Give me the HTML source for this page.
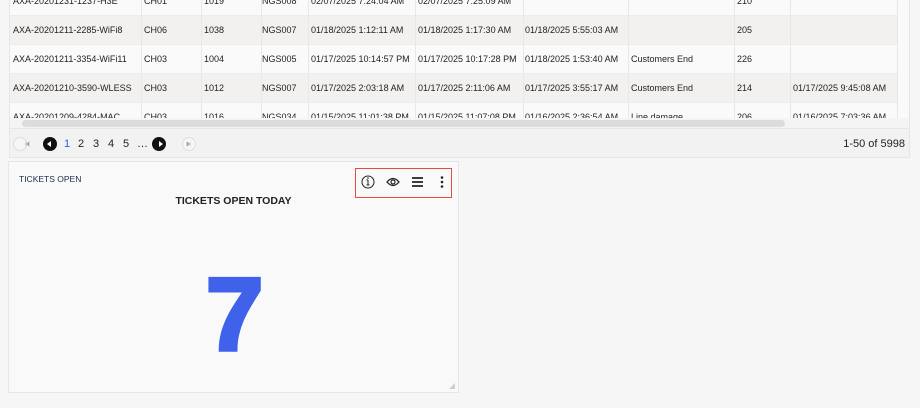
<!DOCTYPE html>
<html><head><style>
*{margin:0;padding:0;box-sizing:border-box}
body{width:920px;height:408px;background:#f6f6f6;font-family:"Liberation Sans",sans-serif;position:relative;overflow:hidden;color:#222}
.tbl{position:absolute;left:9px;top:0;width:901px;height:158px;background:#fafafa;border:1px solid #e6e6e6;border-top:none;overflow:hidden}
.row{position:absolute;left:0;width:888px;height:29px;font-size:9px;line-height:29px;border-bottom:1px solid #ececec}
.row span{position:absolute;top:0;white-space:nowrap}
.odd{background:#f2f1f0}.even{background:#fafafa}
.vl{position:absolute;top:0;height:119px;width:1px;background:#e8e8e8}
.sb{position:absolute;left:0;top:118px;width:899px;height:10px;background:#f4f4f4}
.thumb{position:absolute;left:12px;top:120px;width:763px;height:7px;border-radius:4px;background:#dcdcdc}
.pg{position:absolute;left:0;top:128px;width:899px;height:29px;background:#f2f2f2;border-top:1px solid #e6e6e6}
.circ{position:absolute;width:14px;height:14px;border-radius:7px;top:8px}
.card{position:absolute;left:8px;top:161px;width:451px;height:232px;background:#f9f9f9;border:1px solid #e6e6e6}
.n{position:absolute;top:7px;font-size:11px;line-height:16px}
</style></head><body>
<div class="tbl">
<div class="row even" style="top:-13px"><span style="left:3px">AXA-20201231-1237-H3E</span><span style="left:134px">CH01</span><span style="left:194px">1019</span><span style="left:252px">NGS008</span><span style="left:301px">02/07/2025 7:24:04 AM</span><span style="left:408px">02/07/2025 7:25:09 AM</span><span style="left:727px">210</span></div>
<div class="row odd" style="top:16px"><span style="left:3px">AXA-20201211-2285-WiFi8</span><span style="left:134px">CH06</span><span style="left:194px">1038</span><span style="left:252px">NGS007</span><span style="left:301px">01/18/2025 1:12:11 AM</span><span style="left:408px">01/18/2025 1:17:30 AM</span><span style="left:515px">01/18/2025 5:55:03 AM</span><span style="left:727px">205</span></div>
<div class="row even" style="top:45px"><span style="left:3px">AXA-20201211-3354-WiFi11</span><span style="left:134px">CH03</span><span style="left:194px">1004</span><span style="left:252px">NGS005</span><span style="left:301px">01/17/2025 10:14:57 PM</span><span style="left:408px">01/17/2025 10:17:28 PM</span><span style="left:515px">01/18/2025 1:53:40 AM</span><span style="left:621px">Customers End</span><span style="left:727px">226</span></div>
<div class="row odd" style="top:74px"><span style="left:3px">AXA-20201210-3590-WLESS</span><span style="left:134px">CH03</span><span style="left:194px">1012</span><span style="left:252px">NGS007</span><span style="left:301px">01/17/2025 2:03:18 AM</span><span style="left:408px">01/17/2025 2:11:06 AM</span><span style="left:515px">01/17/2025 3:55:17 AM</span><span style="left:621px">Customers End</span><span style="left:727px">214</span><span style="left:783px">01/17/2025 9:45:08 AM</span></div>
<div class="row even" style="top:103px"><span style="left:3px">AXA-20201209-4284-MAC</span><span style="left:134px">CH03</span><span style="left:194px">1016</span><span style="left:252px">NGS034</span><span style="left:301px">01/15/2025 11:01:38 PM</span><span style="left:408px">01/15/2025 11:07:08 PM</span><span style="left:515px">01/16/2025 2:36:54 AM</span><span style="left:621px">Line damage</span><span style="left:727px">206</span><span style="left:783px">01/16/2025 7:03:36 AM</span></div>
<div class="vl" style="left:131px"></div><div class="vl" style="left:191px"></div><div class="vl" style="left:251px"></div><div class="vl" style="left:298px"></div><div class="vl" style="left:405px"></div><div class="vl" style="left:513px"></div><div class="vl" style="left:618px"></div><div class="vl" style="left:724px"></div><div class="vl" style="left:780px"></div><div class="vl" style="left:887px"></div>
<div class="sb"></div><div class="thumb"></div>
<div class="pg">
<div class="circ" style="left:3px;background:#f6f6f6;border:1px solid #ddd"></div>
<div class="circ" style="left:33px;background:#111"></div>
<div class="n" style="left:54px;color:#2a64d8">1</div>
<div class="n" style="left:68px">2</div>
<div class="n" style="left:83px">3</div>
<div class="n" style="left:98px">4</div>
<div class="n" style="left:113px">5</div>
<div class="n" style="left:127px">…</div>
<div class="circ" style="left:142px;background:#111"></div>
<div class="circ" style="left:172px;background:#f6f6f6;border:1px solid #ddd"></div>
<div style="position:absolute;right:4px;top:7px;font-size:11px;line-height:16px">1-50 of 5998</div>
</div>
</div>
<svg style="position:absolute;left:9px;top:137px" width="200" height="14"><path d="M42 4 L38 7 L42 10Z" fill="#fff"/><path d="M150 4 L154 7 L150 10Z" fill="#fff"/><path d="M17 5v4M18 7l2-2v4z M181 5v4M180 7l-2-2v4z" stroke="#999" stroke-width=".6" fill="#999"/></svg>
<div class="card">
<div style="position:absolute;left:10px;top:12px;font-size:8.5px;color:#1d2a4a">TICKETS OPEN</div>
<div style="position:absolute;left:0;width:100%;top:33px;text-align:center;font-size:10.5px;font-weight:bold;color:#222">TICKETS OPEN TODAY</div>
<div style="position:absolute;left:346px;top:6px;width:97px;height:30px;border:1.5px solid #ea4a3a"></div>
<svg style="position:absolute;left:346px;top:6px" width="97" height="30">
<circle cx="13" cy="14" r="6" fill="none" stroke="#222" stroke-width="1"/><path d="M13 12v5M11.5 17h3M11.5 12h1.5" stroke="#222" stroke-width="1" fill="none"/><circle cx="13" cy="10" r=".8" fill="#222"/>
<path d="M32 14q6-7 12 0q-6 7-12 0z" fill="none" stroke="#222" stroke-width="1.3"/><circle cx="38" cy="14" r="2" fill="none" stroke="#222" stroke-width="1.2"/>
<path d="M57 10h11M57 14h11M57 18h11" stroke="#222" stroke-width="1.8"/>
<circle cx="87" cy="9.5" r="1.3" fill="#222"/><circle cx="87" cy="14" r="1.3" fill="#222"/><circle cx="87" cy="18.5" r="1.3" fill="#222"/>
</svg>
<div style="position:absolute;left:197px;top:101px;font-size:103px;line-height:103px;font-weight:bold;color:#4062ea;-webkit-text-stroke:4px #4062ea">7</div>
<svg style="position:absolute;right:3px;bottom:3px" width="6" height="6"><path d="M6 0L0 6H6Z" fill="#ccc"/></svg>
</div>
</body></html>
